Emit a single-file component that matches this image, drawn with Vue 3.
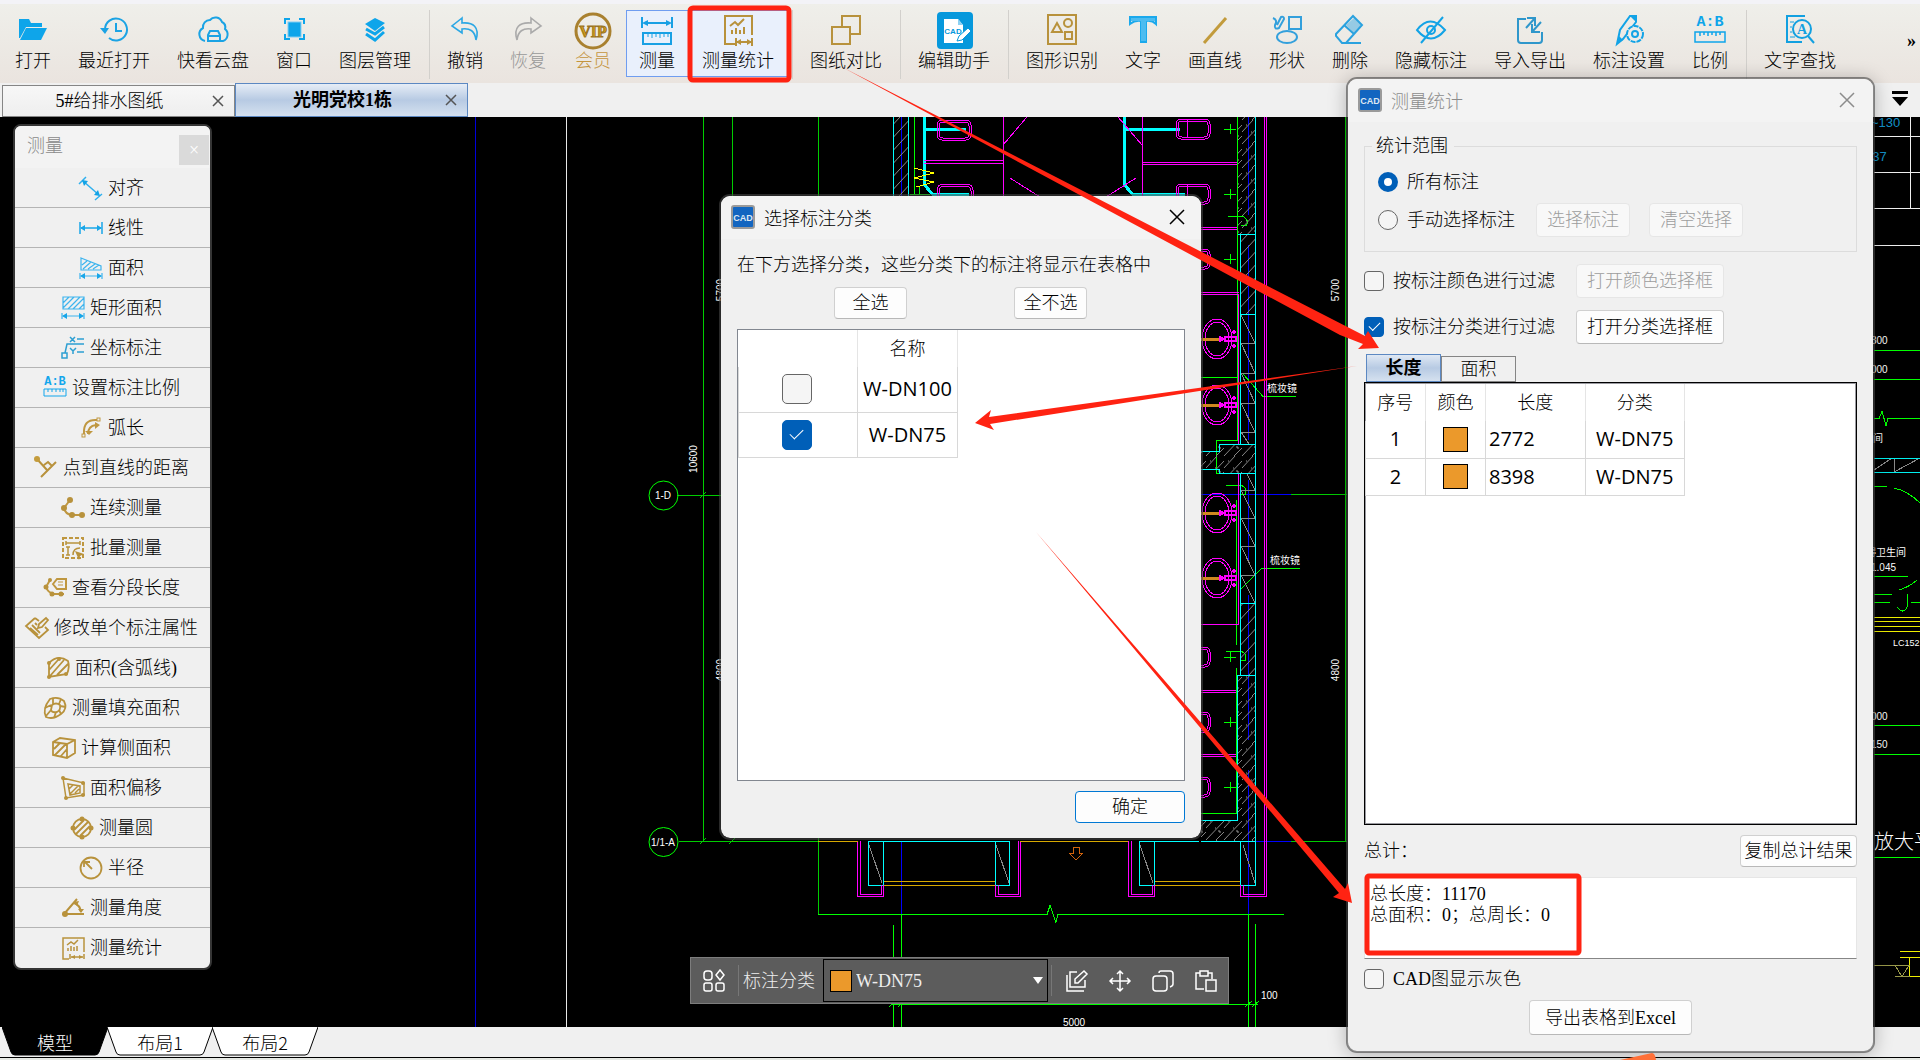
<script setup>
import { ref } from 'vue'

const icons = {
  open: '<path d="M2 24V5h10l2 4h11v4H9L3 24z" fill="#0ea5ea"/><path d="M9 14h21l-6 12H3z" fill="#0ea5ea"/>',
  recent: '<g fill="none" stroke="#1ba3e4" stroke-width="2"><path d="M7 15a11 11 0 1 1 4 9"/><path d="M18 9v8h6"/></g><path d="M2 14h9l-4 6z" fill="#1ba3e4"/>',
  cloud: '<path d="M8 27a7 7 0 0 1-2-13 7 7 0 0 1 7-8 7 7 0 0 1 12 2 6 6 0 0 1 3 7 7 7 0 0 1-2 12h-4" fill="none" stroke="#1ba3e4" stroke-width="2"/><path d="M11 27v-6l2-4h8l2 4v6zM11 22h12" fill="none" stroke="#1ba3e4" stroke-width="2"/>',
  window: '<rect x="10" y="8" width="13" height="15" fill="#0ea5ea" stroke="#7fcdf3"/><path d="M7 10V5h5M21 5h5v5M26 20v5h-5M12 25H7v-5" fill="none" stroke="#0ea5ea" stroke-width="2"/>',
  layers: '<path d="M6 10l10-6 10 5-10 8z" fill="#0ea5ea"/><path d="M7 15l9 5 9-7M7 20l9 6 9-8" fill="none" stroke="#0ea5ea" stroke-width="3"/>',
  undo: '<path d="M13 4L3 12l10 7v-4c8-1 13 2 14 11 4-13-3-18-14-17z" fill="none" stroke="#2ba7e4" stroke-width="1.6"/>',
  redo: '<path d="M19 4l10 8-10 7v-4c-8-1-13 2-14 11-4-13 3-18 14-17z" fill="none" stroke="#aaa" stroke-width="1.6"/>',
  vip: '<ellipse cx="16" cy="17" rx="17" ry="17" fill="none" stroke="#a9812f" stroke-width="3"/><text x="16" y="23" text-anchor="middle" font-family="Liberation Serif, serif" font-size="16" font-weight="bold" fill="#d7a114" stroke="#9a7424" stroke-width="1">VIP</text>',
  measure: '<g fill="none" stroke="#18a0e4" stroke-width="2"><path d="M1 3v11M31 3v11M3 9h26"/><rect x="2" y="19" width="28" height="11"/><path d="M7 19v4M11 19v5M15 19v4M19 19v5M23 19v4M27 19v4" stroke-width="1"/></g><path d="M1 9l6-3v6zM31 9l-6-3v6z" fill="#18a0e4"/>',
  stats: '<g fill="none" stroke="#b8923c" stroke-width="2"><path d="M13 30H3V2h27v19"/><path d="M8 12l5-4 3 3 6-6"/><path d="M10 20v-4M14 20v-6M18 20v-4M22 20v-7" /><path d="M14 24v8M30 24v8M15 28h14"/></g><path d="M14 28l5-3v6zM30 28l-5-3v6z" fill="#b8923c"/>',
  compare: '<g fill="none" stroke="#b8923c" stroke-width="2"><path d="M12 13V2h18v18h-9"/><rect x="2" y="13" width="18" height="17"/></g>',
  helper: '<rect x="-1" y="-2" width="36" height="37" rx="4" fill="#0698dc"/><path d="M6 5h14l5 6v18H6z" fill="#fff"/><path d="M20 5v6h5z" fill="#8dd0f2"/><text x="15" y="20" text-anchor="middle" font-family="Liberation Sans, sans-serif" font-size="8" font-weight="bold" fill="#0698dc">CAD</text><path d="M19 27l2-5 9-8 3 3-9 9z" fill="#fff" stroke="#0698dc"/>',
  recognize: '<g fill="none" stroke="#b8923c" stroke-width="2"><rect x="2" y="1" width="28" height="29"/><path d="M6 18l5-9 5 9z"/><circle cx="22" cy="9" r="4"/><rect x="19" y="18" width="7" height="7"/></g>',
  text: '<path d="M3 3h26v7q-4-4-10-3v21h-5V7Q8 6 3 10z" fill="#fff" fill-opacity=".1" stroke="#1ba9ec" stroke-width="2"/><path d="M14 7h5v20h-5zM4 4h24v3H4z" fill="#4dbcf0"/>',
  line: '<path d="M5 29L27 4" stroke="#c29b3c" stroke-width="3"/>',
  shape: '<g fill="none" stroke="#33a0dc" stroke-width="2"><rect x="18" y="3" width="12" height="12"/><ellipse cx="16" cy="23" rx="10" ry="6"/><path d="M2 4q5 2 2 7-1 5 4 3l5-9q0-3-3-2L6 11"/></g>',
  erase: '<g fill="none" stroke="#2aa2df" stroke-width="2"><path d="M2 20L19 2l9 9-16 18H8l-6-7zM10 11l10 9M10 29h17"/></g><path d="M12 11l8-7 7 7-7 8z" fill="#2aa2df" fill-opacity=".45"/>',
  hide: '<g fill="none" stroke="#12a3e6" stroke-width="2"><path d="M2 16q13-17 28 0-14 17-28 0z"/><circle cx="16" cy="16" r="4"/><path d="M28 3L6 29"/></g>',
  exchange: '<g fill="none" stroke="#2f97cb" stroke-width="2"><path d="M12 5H4v21q0 3 3 3h18q3 0 3-3v-8"/><path d="M12 14l9-10M13 4h8v8M27 8l-9 10M18 10v8h8"/></g>',
  annotate: '<path d="M4 30l3-14L17 2h6v6L10 25z" fill="none" stroke="#12a3e6" stroke-width="2"/><path d="M4 30l2-8 4 4zM17 2h6v6z" fill="#12a3e6"/><circle cx="22" cy="20" r="8" fill="#edebe7" stroke="#12a3e6" stroke-width="2" stroke-dasharray="5 1"/><circle cx="22" cy="20" r="3" fill="none" stroke="#12a3e6" stroke-width="2"/>',
  ratio: '<text x="16" y="12" text-anchor="middle" font-family="Liberation Mono, monospace" font-size="15" font-weight="bold" fill="#0ea5ea">A:B</text><path d="M1 18h30v10H1zM6 18v4M10 18v3M14 18v4M18 18v3M22 18v4M26 18v3" fill="none" stroke="#0ea5ea" stroke-width="1.5"/>',
  find: '<g fill="none" stroke="#12a0e0" stroke-width="2"><path d="M21 2H3v26h15M3 28h8"/><circle cx="18" cy="15" r="9"/><path d="M24 22l6 7"/><path d="M6 8h4M6 13h2M6 18h2M6 23h5" stroke-width="1"/></g><text x="18" y="20" text-anchor="middle" font-family="Liberation Serif, serif" font-size="14" font-weight="bold" fill="#12a0e0">A</text>',

  align: '<g fill="none" stroke="#2fb0ee" stroke-width="1.5"><path d="M0 8l7-7M16 24l7-6M4 5l16 14"/></g><path d="M3 4l6 1-4 5zM21 20l-6-1 4-5z" fill="#12a3e6"/>',
  linear: '<g stroke="#18a6e8" stroke-width="1.5"><path d="M1 6v12M23 6v12M2 12h20"/></g><path d="M1 12l5-3v6zM23 12l-5-3v6z" fill="#18a6e8"/>',
  area: '<g fill="none" stroke="#3db4ee" stroke-width="1.2"><path d="M2 2l20 8v4H2zM3 9l5-4M4 13l8-7M9 13l7-5M14 13l6-4M1 17v6M23 17v6M2 20h20"/></g><path d="M1 20l5-3v6zM23 20l-5-3v6z" fill="#18a6e8"/>',
  rectarea: '<g fill="none" stroke="#3db4ee" stroke-width="1.2"><path d="M2 1h21v12H2zM2 7l6-6M2 12L13 1M7 13L19 1M12 13L23 2M18 13l5-5M1 17v6M23 17v6M2 20h20"/></g><path d="M1 20l5-3v6zM23 20l-5-3v6z" fill="#18a6e8"/>',
  coord: '<g fill="none" stroke="#2d9fd2" stroke-width="1.5"><path d="M9 1l5 5M14 1L9 6M16 3h7M23 8H6L4 17M9 12l3 3 3-3M12 15v3M16 16h7"/><rect x="1" y="17" width="5" height="5"/></g>',
  setratio: '<text x="12" y="9" text-anchor="middle" font-family="Liberation Mono, monospace" font-size="12" font-weight="bold" fill="#12a6ec">A:B</text><path d="M1 13h22v7H1zM5 13v3M9 13v3M13 13v3M17 13v3M20 13v3" fill="none" stroke="#12a6ec"/>',
  arc: '<g fill="none" stroke="#bf9740" stroke-width="2"><path d="M5 18Q4 3 18 4"/><path d="M9 18Q9 10 17 9"/></g><g fill="#f0f0f0" stroke="#bf9740"><rect x="3" y="18" width="3" height="3"/><rect x="18" y="2" width="3" height="3"/></g><path d="M6 15l8 0-4 4zM16 6l5 3-5 4z" fill="#bf9740"/>',
  point: '<g fill="none" stroke="#b8923c" stroke-width="2"><path d="M3 3l10 11M7 21L22 6M10 9l4-3 4 4"/></g><circle cx="3" cy="3" r="3" fill="#c49c3c"/>',
  chain: '<path d="M9 4L3 12q1 6 8 7h11" fill="none" stroke="#bf9740" stroke-width="2"/><g fill="#b8923c"><circle cx="9" cy="4" r="3"/><circle cx="3" cy="12" r="3"/><circle cx="11" cy="19" r="3"/><circle cx="21" cy="19" r="3"/></g>',
  batch: '<rect x="2" y="2" width="20" height="20" fill="none" stroke="#bf9740" stroke-width="2" stroke-dasharray="4 2"/><path d="M5 7h14M5 5v4M19 5v4M7 11v8M5 11h4M5 19h4M12 19q0-7 7-7" fill="none" stroke="#b8923c" stroke-width="1.5"/><path d="M14 15l9 3-4 2-1 4z" fill="#b8923c"/>',
  segment: '<path d="M7 4L3 11q2 6 8 7h10M10 8l4-5h9v10h-9z" fill="none" stroke="#bf9740" stroke-width="2"/><path d="M15 6h5M15 9h5" stroke="#bf9740"/><g fill="#b8923c"><circle cx="7" cy="4" r="2"/><circle cx="3" cy="11" r="2.500"/><circle cx="9" cy="18" r="2.500"/><circle cx="18" cy="18" r="2.500"/></g>',
  modify: '<g fill="none" stroke="#b8923c" stroke-width="1.8"><path d="M10 2L1 10l13 12 9-8-3-3M10 2l4 3M7 9l8 8M10 7l2 2M5 12l8 7M13 12l1-4 7-6 2 2-6 7z"/></g>',
  arcarea: '<g fill="none" stroke="#b8923c" stroke-width="1.8"><path d="M3 7Q12-2 22 5q2 6-1 13l-18 3zM3 14l9-10M4 20L18 4M11 19L22 8"/></g><g fill="#b8923c"><circle cx="3" cy="7" r="2"/><circle cx="13" cy="3" r="2"/><circle cx="3" cy="21" r="2"/><circle cx="20" cy="18" r="2"/></g>',
  fillarea: '<g fill="none" stroke="#b8923c" stroke-width="1.8"><path d="M7 3q8-3 14 2 4 8-3 13-8 6-15 3-4-8 4-18z"/><path d="M9 9q4-3 8 0 1 5-3 7-5 1-6-2zM2 12l6-3M3 20l5-6M11 22l2-6M18 18l-2-4M23 11l-6-1M18 3l-2 5M10 2v6"/></g>',
  side: '<g fill="none" stroke="#b8923c" stroke-width="1.8"><path d="M1 6l7-4 15 2v13l-8 5-14-3zM1 6l14 2 8-4M15 8v14M2 13l6-6M3 19L14 8M9 20l6-7"/></g>',
  offset: '<g fill="none" stroke="#b8923c" stroke-width="1.5"><path d="M2 2l21 5v12L5 22zM7 8l12 2v7l-10 2zM8 13l4-4M9 18l8-8M14 17l4-4"/></g><g fill="#b8923c"><circle cx="2" cy="2" r="2"/><circle cx="22" cy="7" r="2"/><circle cx="22" cy="19" r="2"/><circle cx="5" cy="22" r="2"/></g>',
  circlearea: '<g fill="none" stroke="#b8923c" stroke-width="1.8"><circle cx="12" cy="12" r="9"/><path d="M4 14L14 4M6 18L18 6M10 20L20 10"/></g><g fill="#b8923c"><circle cx="12" cy="3" r="2.5"/><circle cx="3" cy="12" r="2.5"/><circle cx="21" cy="12" r="2.5"/><circle cx="12" cy="21" r="2.5"/></g>',
  radius: '<circle cx="12" cy="12" r="10.5" fill="none" stroke="#b8923c" stroke-width="1.8"/><path d="M13 13L6 6M5 11V6h6" fill="none" stroke="#b8923c" stroke-width="1.8"/>',
  angle: '<path d="M16 3L3 18h20M13 7q6 2 7 9" fill="none" stroke="#b8923c" stroke-width="2"/><circle cx="4" cy="18" r="3" fill="#b8923c"/><path d="M12 6l6-1-2 5zM17 13h6l-3 4z" fill="#b8923c"/>',
  smallstats: '<g fill="none" stroke="#b8923c" stroke-width="1.5"><path d="M8 23H2V2h21v14M6 9l4-3 3 2 4-4M7 15v-3M10 15v-5M13 15v-4M16 15v-5M9 18v5M23 18v5M10 21h12"/></g><path d="M10 21l4-2v4zM22 21l-4-2v4z" fill="#b8923c"/>'
}

const tools = [
  [['open', '打开'], ['recent', '最近打开'], ['cloud', '快看云盘'], ['window', '窗口'], ['layers', '图层管理']],
  [['undo', '撤销'], ['redo', '恢复', 'muted'], ['vip', '会员', 'vip'], ['measure', '测量', 'active'], ['stats', '测量统计', 'active']],
  [['compare', '图纸对比']],
  [['helper', '编辑助手']],
  [['recognize', '图形识别'], ['text', '文字'], ['line', '画直线'], ['shape', '形状'], ['erase', '删除'], ['hide', '隐藏标注'], ['exchange', '导入导出'], ['annotate', '标注设置'], ['ratio', '比例']],
  [['find', '文字查找']]
]

const measures = [
  ['align', '对齐'], ['linear', '线性'], ['area', '面积'], ['rectarea', '矩形面积'], ['coord', '坐标标注'],
  ['setratio', '设置标注比例'], ['arc', '弧长'], ['point', '点到直线的距离'], ['chain', '连续测量'], ['batch', '批量测量'],
  ['segment', '查看分段长度'], ['modify', '修改单个标注属性'], ['arcarea', '面积(含弧线)'], ['fillarea', '测量填充面积'],
  ['side', '计算侧面积'], ['offset', '面积偏移'], ['circlearea', '测量圆'], ['radius', '半径'], ['angle', '测量角度'],
  ['smallstats', '测量统计']
]

const scope = ref('all')
const byColor = ref(false)
const byClass = ref(true)
const gray = ref(false)
const classes = ref([{ name: 'W-DN100', on: false }, { name: 'W-DN75', on: true }])
const rows = [{ n: 1, len: 2772, cls: 'W-DN75' }, { n: 2, len: 8398, cls: 'W-DN75' }]
const total = ref('总长度：11170\n总面积：0；总周长：0')

const stallsTop = [129, 194, 259]
const stallsLow = [657, 722, 787]
const basins = [339, 405, 513, 578]
</script>

<template>
  <div class="app">
    <header class="toolbar">
      <template v-for="(group, gi) in tools" :key="gi">
        <span v-if="gi" class="sep"></span>
        <button v-for="t in group" :key="t[1]" type="button" class="tool" :class="t[2]">
          <svg viewBox="0 0 32 32" v-html="icons[t[0]]"></svg>
          <span>{{ t[1] }}</span>
        </button>
      </template>
      <span class="more">»</span>
    </header>

    <nav class="tabs">
      <div class="tab"><a href="#">5#给排水图纸</a><button type="button" aria-label="关闭"><svg viewBox="0 0 12 12"><path d="M1 1l10 10M11 1L1 11" /></svg></button></div>
      <div class="tab current"><a href="#">光明党校1栋</a><button type="button" aria-label="关闭"><svg viewBox="0 0 12 12"><path d="M1 1l10 10M11 1L1 11" /></svg></button></div>
      <svg class="tab-menu" viewBox="0 0 18 16"><path d="M1 0h16v3H1zM1 6h16l-8 9z" /></svg>
    </nav>

    <main class="canvas">
      <svg class="drawing" viewBox="0 117 1920 910" preserveAspectRatio="xMinYMin slice">
        <defs>
          <pattern id="hatch" width="12" height="13" patternUnits="userSpaceOnUse">
            <path d="M0 13L12 0" stroke="#8a8a8a" fill="none" />
          </pattern>
          <pattern id="concrete" width="18" height="24" patternUnits="userSpaceOnUse">
            <path d="M0 12L11 0M0 24L18 5M10 24l8-8" stroke="#858585" fill="none" />
            <path d="M12 15h2v2M4 5h1M9 12h1" stroke="#999" fill="none" />
          </pattern>
          <g id="stall">
            <rect x="1176" y="-10" width="34" height="20" rx="5" />
            <rect x="1178" y="-8" width="30" height="16" rx="4" />
            <path d="M1187-9V9" />
            <path d="M1224 0h12M1230-5V5" stroke="#0f0" />
          </g>
          <g id="basin">
            <ellipse cx="1217" cy="0" rx="15" ry="20" />
            <ellipse cx="1217" cy="0" rx="12" ry="17" />
            <path d="M1201 0h20" stroke="#d08820" stroke-width="3" />
            <path d="M1225-2h11v4h-11zM1220-2l4 2-4 2zM1234-9v4M1232-7h4M1234 5v4M1232 7h4" stroke-width="2" />
          </g>
        </defs>

        <g fill="none" stroke-width="1" shape-rendering="crispEdges">
          <path d="M475.500 117V1027" stroke="#0000d8" />
          <path d="M566.500 117V1027" stroke="#e8e8e8" />
          <path d="M901.500 117v80M1248.500 117v98M1248.500 245v195M1248.500 480v82M1248.500 595v145M1248.500 770v144M901.500 841v73M1201 494.500h90M1256 841.500h35" stroke="#00f" />

          <g stroke="#0c0">
            <path d="M703.500 117V842M732.500 117V200M818.500 117V200M818.500 838V914M677 495.500h45M679 841.500h140M1345.500 117V842M1291 494.500h56M1291 841.500h56M700 498l6-6M700 844l6-6M729 844l6-6" />
          </g>
          <g stroke="#0f0">
            <path d="M818 914.500H1047l3-9 6 17 2-8h226M893.500 925v102M901.500 914v113M1248.500 914v113M1255.500 924v103M892 1004.500h366M889 1007l7-6M898 1007l7-6M1245 1007l7-6M1252 1007l7-6" />
            <path d="M1237.500 117V440H1216v33h21M1236.500 500v145M1236.500 668v145H1201M1201 377.500h36M1228 216.500h15q7 4 3 9h-5M1226 485.500h16q6 4 3 9h-4M1226 651.500h16q6 4 3 9h-4M1243 374l20 22.500h33M1241 589l21-21h38" />
            <path d="M914 117v78M910 194h20M919 186v9" />
          </g>

          <rect x="1238" y="117" width="18" height="118" fill="url(#concrete)" />
          <rect x="1241" y="235" width="15" height="80" fill="url(#hatch)" />
          <rect x="1217" y="445" width="39" height="28" fill="url(#concrete)" />
          <rect x="1201" y="451" width="16" height="18" fill="url(#concrete)" />
          <rect x="1241" y="603" width="15" height="72" fill="url(#hatch)" />
          <rect x="1238" y="675" width="18" height="166" fill="url(#concrete)" />
          <rect x="1201" y="820" width="37" height="21" fill="url(#concrete)" />
          <rect x="893" y="117" width="15" height="80" fill="url(#hatch)" />

          <path d="M1241 315l14 28h-14l14 30h-14l14 30h-14l14 29h-14l8 12M1247 474l8 16h-14l14 28h-14l14 28h-14l14 29h-14l14 28M869 845l13 38M996 845l13 38M1140 845l13 38M1243 845l12 38" stroke="#888" />

          <g stroke="#0ff">
            <path d="M1255.500 117V885M1237.500 234.500h18M1240.500 234V444M1240.500 314.500h15M1201 451.500h18v-7h36M1201 469.500h18v4h36M1240.500 474V675M1240.500 603.500h15M1237.500 675.500h18M1237.500 675V820H1201M1201 841.500h54" />
            <path d="M893.500 117v80M908.500 117v80M868.500 841V885h15V841M995.500 841V885h14V841M1139.500 841V885h15V841M1240.500 841V885h15M868 841.500h141M1139 841.500h60" />
            <path d="M924.500 117V185l8 9h36M1124.500 117V185l8 9h52M924 129h42M1124 129h56" stroke-width="3" />
          </g>

          <g stroke="#f0f">
            <path d="M1264.500 117V894.500H1243.500V885M1266.500 117V896.500H1240.500V885M1003.500 117v80M1142.500 117v80M924 160.500h80M924 163.500h80M1142 162.500h95M1142 164.500h95M1003 145l24-28M1010 178l30 19M1142 145l-24-28M1136 178l-30 19" />
            <path d="M1201 227.500h36M1201 229.500h36M1201 292.500h38M1201 294.500h38M1238.500 294V444M1238.500 474V624.500H1201M1201 690.500h35M1201 692.500h35M1201 754.500h35M1201 756.500h35" />
            <path d="M857.500 841V896.500h26V885M860.500 841V894.500h21V885M1020.500 841V896.500h-25V885M1018.500 841V894.500h-20V885M1128.500 841V896.500h26V885M1131.500 841V894.500h21V885" />
            <rect x="937" y="120" width="34" height="20" rx="5" /><rect x="939" y="122" width="30" height="16" rx="4" />
            <rect x="937" y="184" width="36" height="20" rx="6" /><rect x="939" y="186" width="32" height="16" rx="5" />
            <use v-for="y in stallsTop" :key="y" href="#stall" :transform="`translate(0 ${y})`" />
            <use v-for="y in basins" :key="y" href="#basin" :transform="`translate(0 ${y})`" />
            <use v-for="y in stallsLow" :key="y" href="#stall" :transform="`translate(0 ${y})`" />
          </g>
          <path d="M914 168l20 5-20 5 20 4-18 5" stroke="#ff0" />
          <path d="M818 841.500h40M1020 841.500h108M884 881.500h111M884 885.500h111M1155 881.500h85M1155 885.500h85" stroke="#d6a800" />
          <path d="M1073 847v6h-4l7 7 7-7h-4v-6z" stroke="#d2640c" />

          <path d="M1874 136.500h46M1874 172.500h46M1910.500 117v91M1874 208.500h46M1874 245.500h46" stroke="#eee" />
          <path d="M1874 350.500h46M1874 379.500h46M1874 418.500h5l3-7 4 14 2-7h32M1874 486.500h13M1894 488q14 3 26 15M1874 576.500h34M1874 594.500h18M1899 590q10-3 18-10M1874 602.500h16M1911 602.500h9M1907 594v13q-4 8-10 0M1874 725.500h46M1874 754.500h46M1874 857.500h46" stroke="#0f0" />
          <path d="M1874 470l18-12M1894 472v-14M1894 472l26-14" stroke="#888" />
          <path d="M1874 458.500h46M1874 472.500h46" stroke="#0ee" />
          <path d="M1874 617.500h46M1874 621.500h46M1874 626.500h46M1874 631.500h46M1900 951.500h20M1900 957.500h20M1909.500 957v19h11" stroke="#ee0" />
          <path d="M1874 965.500h35l-7 11-7-11M1895 976.500h15" stroke="#99994a" />
        </g>

        <g fill="none" stroke="#0f0">
          <circle cx="663.500" cy="495.500" r="14.500" />
          <circle cx="663.500" cy="842" r="14.500" />
        </g>
        <g class="cad-text" fill="#fff">
          <text x="663" y="499" text-anchor="middle">1-D</text>
          <text x="663" y="846" text-anchor="middle">1/1-A</text>
          <text transform="translate(697 459) rotate(-90)" text-anchor="middle">10600</text>
          <text transform="translate(724 290) rotate(-90)" text-anchor="middle">5700</text>
          <text transform="translate(724 670) rotate(-90)" text-anchor="middle">4800</text>
          <text transform="translate(1339 290) rotate(-90)" text-anchor="middle">5700</text>
          <text transform="translate(1339 670) rotate(-90)" text-anchor="middle">4800</text>
          <text x="1267" y="392">梳妆镜</text>
          <text x="1270" y="564">梳妆镜</text>
          <text x="1261" y="999">100</text>
          <text x="1074" y="1026" text-anchor="middle">5000</text>
          <text x="1871" y="344">300</text>
          <text x="1871" y="373">000</text>
          <text x="1873" y="442">间</text>
          <text x="1856" y="556">障碍卫生间</text>
          <text x="1871" y="571">1.045</text>
          <text x="1893" y="646" class="small">LC152</text>
          <text x="1871" y="720">000</text>
          <text x="1871" y="748">150</text>
          <text x="1874" y="849" class="big">放大平</text>
          <g fill="#1391c9"><text x="1871" y="127" class="mid">~130</text><text x="1868" y="161" class="mid">-37</text></g>
        </g>
      </svg>

      <section class="window palette">
        <div class="palette-title"><span>测量</span><button type="button" aria-label="关闭">×</button></div>
        <button v-for="m in measures" :key="m[0]" type="button" class="palette-item">
          <svg viewBox="0 0 24 24" v-html="icons[m[0]]"></svg><span>{{ m[1] }}</span>
        </button>
      </section>

      <div class="window classbar">
        <svg viewBox="0 0 24 24"><rect x="2" y="2" width="8" height="9" rx="3" /><rect x="2" y="14" width="8" height="8" rx="2" /><rect x="14" y="14" width="8" height="8" rx="2" /><path d="M18 1l4 5-4 5-4-5z" /></svg>
        <i></i>
        <label for="cls">标注分类</label>
        <div class="picker">
          <span class="swatch"></span>
          <select id="cls"><option>W-DN75</option></select>
        </div>
        <i></i>
        <button type="button" aria-label="编辑"><svg viewBox="0 0 24 24"><path d="M12 3H5v15h15v-7M10 14v-4l9-8 3 3-9 9zM2 6v16h17" /></svg></button>
        <button type="button" aria-label="移动"><svg viewBox="0 0 24 24"><path d="M12 2v20M2 12h20M9 5l3-3 3 3M9 19l3 3 3-3M5 9l-3 3 3 3M19 9l3 3-3 3" /></svg></button>
        <button type="button" aria-label="复制"><svg viewBox="0 0 24 24"><rect x="2" y="7" width="14" height="15" rx="3" /><path d="M8 4q0-2 2-2h9q3 0 3 3v10q0 2-3 3" /></svg></button>
        <button type="button" aria-label="粘贴"><svg viewBox="0 0 24 24"><path d="M10 20H2V4h4M14 4h4v6M6 2h8v5H6z" /><rect x="12" y="11" width="10" height="11" /></svg></button>
      </div>
    </main>

    <footer class="sheets">
      <button type="button" class="sheet on"><svg viewBox="0 0 106 29" preserveAspectRatio="none"><path d="M0 0h106l-9 25q-1 3-4 3H13q-3 0-4-3z" /></svg><span>模型</span></button>
      <button type="button" class="sheet"><svg viewBox="0 0 106 29" preserveAspectRatio="none"><path d="M0 0l9 25q1 3 4 3h80q3 0 4-3l9-25" /></svg><span>布局1</span></button>
      <button type="button" class="sheet"><svg viewBox="0 0 106 29" preserveAspectRatio="none"><path d="M0 0l9 25q1 3 4 3h80q3 0 4-3l9-25" /></svg><span>布局2</span></button>
    </footer>
    <div class="edge"></div>

    <section class="window dialog chooser">
      <div class="dialog-title">
        <svg class="logo" viewBox="0 0 24 24"><rect x="1" y="1" width="22" height="22" rx="2" /><text x="12" y="16" text-anchor="middle">CAD</text></svg>
        <h2>选择标注分类</h2>
        <button type="button" aria-label="关闭"><svg viewBox="0 0 16 16"><path d="M1 1l14 14M15 1L1 15" /></svg></button>
      </div>
      <div class="chooser-body">
        <p>在下方选择分类，这些分类下的标注将显示在表格中</p>
        <div class="pair"><button type="button" class="btn">全选</button><button type="button" class="btn">全不选</button></div>
        <div class="grid-box">
          <table class="names">
            <thead><tr><th></th><th>名称</th></tr></thead>
            <tbody>
              <tr v-for="c in classes" :key="c.name">
                <td><input v-model="c.on" type="checkbox" class="check large" :aria-label="c.name"></td>
                <td>{{ c.name }}</td>
              </tr>
            </tbody>
          </table>
        </div>
        <button type="button" class="btn primary">确定</button>
      </div>
    </section>

    <section class="window dialog stats">
      <div class="dialog-title">
        <svg class="logo" viewBox="0 0 24 24"><rect x="1" y="1" width="22" height="22" rx="2" /><text x="12" y="16" text-anchor="middle">CAD</text></svg>
        <h2>测量统计</h2>
        <button type="button" aria-label="关闭"><svg viewBox="0 0 16 16"><path d="M1 1l14 14M15 1L1 15" /></svg></button>
      </div>
      <div class="stats-body">
        <fieldset>
          <legend>统计范围</legend>
          <div class="line"><label><input v-model="scope" type="radio" value="all">所有标注</label></div>
          <div class="line">
            <label><input v-model="scope" type="radio" value="manual">手动选择标注</label>
            <button type="button" class="btn pick" disabled>选择标注</button>
            <button type="button" class="btn pick" disabled>清空选择</button>
          </div>
        </fieldset>
        <div class="filter"><label><input v-model="byColor" type="checkbox" class="check">按标注颜色进行过滤</label><button type="button" class="btn" disabled>打开颜色选择框</button></div>
        <div class="filter"><label><input v-model="byClass" type="checkbox" class="check">按标注分类进行过滤</label><button type="button" class="btn">打开分类选择框</button></div>
        <div class="kinds"><button type="button" class="on">长度</button><button type="button">面积</button></div>
        <div class="grid-box dark">
          <table class="lengths">
            <thead><tr><th>序号</th><th>颜色</th><th>长度</th><th>分类</th></tr></thead>
            <tbody>
              <tr v-for="r in rows" :key="r.n"><td>{{ r.n }}</td><td><span class="swatch"></span></td><td>{{ r.len }}</td><td>{{ r.cls }}</td></tr>
            </tbody>
          </table>
        </div>
        <div class="sum"><label for="total">总计：</label><button type="button" class="btn">复制总计结果</button></div>
        <textarea id="total" v-model="total" readonly></textarea>
        <label class="gray"><input v-model="gray" type="checkbox" class="check">CAD图显示灰色</label>
        <button type="button" class="btn export">导出表格到Excel</button>
      </div>
    </section>

    <svg class="marks" viewBox="0 0 1920 1060" preserveAspectRatio="xMinYMin slice">
      <g fill="none" stroke="#ff2312" stroke-width="5">
        <rect x="690" y="8" width="99" height="72" rx="3" />
        <rect x="1367" y="876" width="212" height="77" rx="2" />
      </g>
      <g fill="#ff2312">
        <path d="M842 67L1365 336l3-5 11 17-21 1 5-5L1340 335z" />
        <path d="M1357 366L989 417l2-7-16 13 19 7-4-6z" />
        <path d="M1036 532L1345 889l3-6 4 20-19-6 6-4z" />
      </g>
      <path d="M1620 1060l32-7q3 0 4 7z" fill="#ff7038" />
    </svg>
  </div>
</template>

<style>
body {
  margin: 0;
  background: #f0f0f0;
}
</style>

<style scoped>
* {
  box-sizing: border-box;
}
.app {
  position: relative;
  display: flex;
  flex-direction: column;
  min-height: 100vh;
  overflow: hidden;
  background: #f0f0f0;
  color: #000;
  font: 300 18px/22px "Liberation Serif", "Noto Sans CJK SC", serif;
}
button, select, textarea {
  font: inherit;
  color: inherit;
}
button {
  padding: 0;
  border: 0;
  background: none;
  white-space: nowrap;
}
.toolbar {
  display: flex;
  align-items: flex-start;
  height: 83px;
  padding: 6px 4px 0 2px;
  border-top: 4px solid #f3f3f7;
  background: linear-gradient(#efefea, #eae4df);
}
.tool {
  display: flex;
  flex: none;
  flex-direction: column;
  align-items: center;
  gap: 4px;
  height: 67px;
  padding: 3px 13px 0 12px;
  border: 1px solid transparent;
}
.tool svg {
  width: 32px;
  height: 32px;
  overflow: visible;
}
.tool.muted {
  color: #999;
}
.tool.vip {
  padding: 3px 14px 0;
  color: #c4943c;
}
.tool.active {
  border-color: #6f9df0;
  background: #e9f0fc;
}
.sep {
  flex: none;
  width: 1px;
  height: 69px;
  margin: 0 4px;
  background: #d2d0cc;
}
.more {
  margin-left: auto;
  padding-top: 20px;
  font-weight: 700;
}
.tabs {
  display: flex;
  align-items: flex-end;
  height: 34px;
  padding-left: 2px;
}
.tab {
  display: flex;
  align-items: center;
  width: 233px;
  height: 32px;
  border: 1px solid #858585;
  background: linear-gradient(#f7f7f7, #eeeeee);
}
.tab a {
  flex: 1;
  padding-left: 14px;
  color: inherit;
  text-align: center;
  text-decoration: none;
}
.tab button {
  width: 32px;
  height: 28px;
}
.tab svg {
  width: 12px;
  height: 12px;
  stroke: #555;
  stroke-width: 1.5;
}
.tab.current {
  height: 34px;
  border-color: #5c88c2;
  background: linear-gradient(#e6edf6, #b7cae3 50%, #d5e1ef);
  font-weight: 700;
}
.tab-menu {
  width: 18px;
  height: 16px;
  margin: 0 11px 10px auto;
}
.canvas {
  position: relative;
  flex: 1;
  min-height: 910px;
  background: #000;
}
.drawing, .marks {
  position: absolute;
  inset: 0;
  width: 100%;
  height: 100%;
}
.marks {
  pointer-events: none;
}
.cad-text {
  font-family: "Liberation Sans Narrow", "Liberation Sans", "Noto Sans CJK SC", sans-serif;
  font-size: 10px;
  font-weight: 400;
}
.cad-text .small {
  font-size: 9px;
}
.cad-text .mid {
  font-size: 13px;
}
.cad-text .big {
  font-size: 20px;
  font-weight: 300;
}
.window {
  position: absolute;
}
.palette {
  top: 7px;
  left: 13px;
  display: flex;
  flex-direction: column;
  width: 199px;
  border: 2px solid #353535;
  border-radius: 8px;
  overflow: hidden;
  background: #f0f0f0;
}
.palette-title {
  display: flex;
  justify-content: space-between;
  height: 42px;
  padding: 9px 1px 0 12px;
  background: #f3f3f3;
  color: #8a8a8a;
}
.palette-title button {
  width: 30px;
  height: 30px;
  background: #dadada;
  color: #fff;
}
.palette-item {
  display: flex;
  align-items: center;
  justify-content: center;
  gap: 5px;
  height: 40px;
  padding-right: 2px;
  border-bottom: 1px solid #b4b4b4;
}
.palette-item:last-child {
  border: 0;
}
.palette-item svg {
  width: 24px;
  height: 24px;
  overflow: visible;
}
.classbar {
  left: 690px;
  bottom: 23px;
  display: flex;
  align-items: center;
  width: 539px;
  height: 47px;
  padding-left: 11px;
  border: 1px solid #7d7d7d;
  background: #5c5c5c;
  color: #eee;
}
.classbar svg {
  width: 24px;
  height: 24px;
  fill: none;
  stroke: #fff;
  stroke-width: 1.5;
}
.classbar i {
  width: 1px;
  height: 31px;
  margin: 0 4px 0 12px;
  background: #777;
}
.classbar .picker + i {
  margin: 0 3px;
}
.classbar button {
  width: 43px;
  height: 24px;
}
.picker {
  position: relative;
  display: flex;
  align-items: center;
  gap: 4px;
  width: 225px;
  height: 43px;
  margin-left: 8px;
  padding: 0 6px;
  border: 1px solid #000;
}
.picker::after {
  position: absolute;
  right: 4px;
  border: 5px solid transparent;
  border-top: 7px solid #fff;
  border-bottom: 0;
  content: "";
}
.picker select {
  flex: 1;
  padding: 0;
  border: 0;
  appearance: none;
  background: none;
}
.swatch {
  display: block;
  width: 22px;
  height: 22px;
  border: 1px solid #000;
  background: #eb992b;
}
.sheets {
  display: flex;
  height: 30px;
  padding-left: 2px;
}
.sheet {
  position: relative;
  width: 106px;
  height: 29px;
  margin-right: -1px;
  font-family: "Noto Sans CJK SC", sans-serif;
}
.sheet svg {
  position: absolute;
  inset: 0;
  width: 106px;
  height: 29px;
  fill: #fff;
  stroke: #000;
}
.sheet span {
  position: relative;
}
.sheet.on {
  color: #fff;
}
.sheet.on svg {
  fill: #000;
}
.edge {
  height: 3px;
  border-top: 1px solid #000;
  background: #e6e9e4;
}
.dialog {
  border: 2px solid rgb(70 70 70 / 60%);
  border-radius: 11px;
  background: #f0f0f0;
  background-clip: padding-box;
}
.dialog-title {
  display: flex;
  align-items: center;
  height: 43px;
  padding: 0 16px 2px 10px;
  border-radius: 9px 9px 0 0;
  background: #f3f3f3;
}
.dialog-title h2 {
  flex: 1;
  margin: 0 0 0 9px;
  font: 300 18px/22px "Noto Sans CJK SC", sans-serif;
}
.dialog-title button svg {
  display: block;
  width: 16px;
  height: 16px;
  stroke: currentColor;
  stroke-width: 1.5;
}
.logo {
  width: 24px;
  height: 24px;
  fill: #1265c0;
  stroke: #9a9a9a;
  stroke-width: 2;
}
.logo text {
  fill: #dfe8f2;
  stroke: none;
  font: 700 9px "Liberation Sans", sans-serif;
}
.chooser {
  top: 194px;
  left: 719px;
  width: 484px;
}
.chooser-body {
  display: flex;
  flex-direction: column;
  padding: 15px 16px;
}
.chooser-body p {
  margin: 0;
  white-space: nowrap;
}
.pair {
  display: flex;
  gap: 107px;
  margin: 11px 0 10px 97px;
}
.btn {
  height: 32px;
  border: 1px solid #d0d0d0;
  border-bottom-color: #b8b8b8;
  border-radius: 4px;
  background: #fdfdfd;
}
.btn:disabled {
  border-color: #e6e6e6;
  background: #f8f8f8;
  color: #9d9d9d;
}
.pair .btn {
  width: 73px;
}
.grid-box {
  height: 452px;
  border: 1px solid #828790;
  background: #fff;
}
.btn.primary {
  align-self: flex-end;
  width: 110px;
  margin-top: 10px;
  border-color: #0078d4;
}
table {
  border-collapse: collapse;
  table-layout: fixed;
}
th {
  height: 37px;
  padding: 0;
  border-right: 1px solid #e5e5e5;
  font-weight: 300;
}
td {
  padding: 0;
  border: 1px solid #d8d8d8;
  border-top: 0;
  font: 400 20px/24px "Open Sans", "Noto Sans", sans-serif;
  text-align: center;
}
.names {
  width: 220px;
}
.names th:first-child {
  width: 119px;
}
.names td {
  height: 45px;
}
.check {
  display: grid;
  place-items: center;
  flex: none;
  width: 20px;
  height: 20px;
  margin: 0;
  border: 1px solid #666;
  border-radius: 4px;
  appearance: none;
  background: #f5f5f5;
}
.check.large {
  width: 30px;
  height: 30px;
  margin: 0 auto;
  border-radius: 5px;
}
.names td:first-child {
  padding-right: 3px;
}
.check:checked {
  border-color: #005fb8;
  background: #005fb8;
}
.check:checked::after {
  width: 10px;
  height: 5px;
  margin-bottom: 4px;
  border: solid #fff;
  border-width: 0 0 1px 1px;
  transform: rotate(-45deg);
  content: "";
}
.check.large:checked::after {
  width: 12px;
  height: 6px;
}
.stats {
  top: 77px;
  left: 1346px;
  width: 529px;
  box-shadow: 0 2px 18px rgb(0 0 0 / 25%);
}
.stats .dialog-title {
  color: #8c8c8c;
}
.stats .dialog-title button {
  margin-right: 2px;
}
.stats-body {
  display: flex;
  flex-direction: column;
  padding: 13px 16px 16px;
}
fieldset {
  height: 117px;
  margin: 0;
  padding: 8px 13px 0;
  border: 1px solid #dcdcdc;
}
legend {
  padding: 0 6px 0 4px;
  margin-left: -6px;
}
.line {
  display: flex;
  align-items: center;
  height: 42px;
}
.line:first-of-type {
  height: 34px;
}
label {
  display: flex;
  align-items: center;
  gap: 9px;
  white-space: nowrap;
}
input[type="radio"] {
  width: 20px;
  height: 20px;
  margin: 0;
  border: 1px solid #666;
  border-radius: 50%;
  appearance: none;
  background: #f5f5f5;
}
input[type="radio"]:checked {
  border: 6px solid #005fb8;
  background: #fff;
}
.pick {
  width: 94px;
  height: 34px;
  margin-left: 19px;
}
.line label + .pick {
  margin-left: 21px;
}
.filter {
  display: flex;
  align-items: center;
  gap: 21px;
  margin-top: 12px;
}
.filter .btn {
  width: 148px;
  height: 34px;
}
.kinds {
  display: flex;
  align-items: flex-end;
  height: 28px;
  margin: 10px 0 0 2px;
}
.kinds button {
  width: 75px;
  height: 26px;
  border: 1px solid #858585;
}
.kinds .on {
  height: 28px;
  border-color: #5c88c2;
  background: linear-gradient(#dfe8f4, #b7cae3 50%, #d5e1ef);
  font-weight: 700;
}
.grid-box.dark {
  height: 443px;
  border-color: #000;
  box-shadow: inset 0 0 0 1px #9a9aa0;
  padding-top: 1px;
}
.lengths {
  width: 320px;
}
.lengths th:nth-child(-n+2) {
  width: 60px;
}
.lengths td {
  height: 37px;
}
.lengths td:nth-child(3) {
  padding-left: 3px;
  text-align: left;
}
.lengths .swatch {
  width: 25px;
  height: 25px;
  margin: auto;
}
.sum {
  display: flex;
  align-items: center;
  justify-content: space-between;
  margin: 10px 0;
}
.sum .btn {
  width: 117px;
}
textarea {
  height: 82px;
  padding: 6px 5px;
  border: 1px solid #e6e6e6;
  border-bottom-color: #868686;
  background: #fff;
  line-height: 21px;
  resize: none;
  outline: 0;
}
.gray {
  margin-top: 9px;
}
.export {
  align-self: center;
  width: 163px;
  height: 35px;
  margin-top: 10px;
}
</style>
